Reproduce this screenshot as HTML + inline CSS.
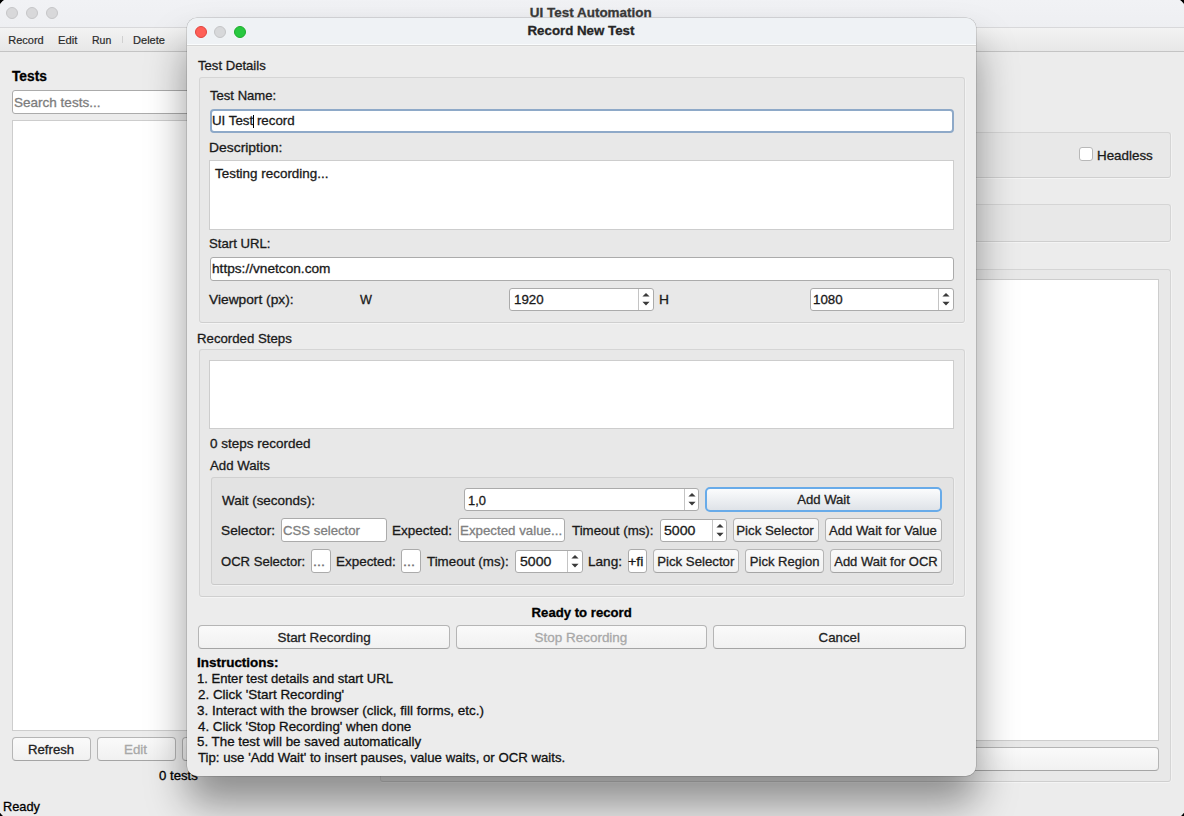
<!DOCTYPE html>
<html><head><meta charset="utf-8"><style>
html,body{margin:0;padding:0;}
body{width:1184px;height:816px;background:#000;position:relative;overflow:hidden;font-family:"Liberation Sans",sans-serif;}
div,svg{position:absolute;box-sizing:border-box;}
.t{white-space:nowrap;-webkit-text-stroke:0.3px currentColor;}
.win{left:-1.5px;top:-1px;width:1186.5px;height:818.5px;background:#ececec;border-radius:10px;overflow:hidden;}
.inp{background:#fff;border:1px solid #ababab;border-radius:3px;}
.ta{background:#fff;border:1px solid #cdcdcd;}
.grp{background:#e8e8e8;border:1px solid #d5d5d5;border-bottom-color:#cfcfcf;border-radius:3px;box-shadow:0 1px 0 rgba(255,255,255,0.45),1px 0 0 rgba(255,255,255,0.3);}
.grp2{background:#e3e3e3;border:1px solid #d0d0d0;border-bottom-color:#c9c9c9;border-radius:3px;box-shadow:0 1px 0 rgba(255,255,255,0.4),1px 0 0 rgba(255,255,255,0.3);}
.btn{background:linear-gradient(#fafafa,#f1f1f1);border:1px solid #b5b5b5;border-bottom-color:#a5a5a5;border-radius:4px;}
.btn.focus{background:linear-gradient(#fbfcfd,#dfe3e8);border:2px solid #68abe9;border-radius:5px;}
.tl{width:12px;height:12px;border-radius:50%;}
</style></head><body>
<div class="win"><div style="left:1.5px;top:1px;width:1184px;height:816px;">

<div class="" style="left:0px;top:0px;width:1184px;height:27px;background:linear-gradient(#f1f2f5,#eeeff2);"></div>
<div class="" style="left:0px;top:27px;width:1184px;height:1px;background:#d8d8da;"></div>
<div class="" style="left:0px;top:28px;width:1184px;height:23px;background:linear-gradient(#f3f3f3,#e7e7e7);"></div>
<div class="" style="left:0px;top:51px;width:1184px;height:1px;background:#c4c4c4;"></div>
<div class="tl" style="left:6px;top:6.800000000000001px;background:#d8d8da;border:1px solid #c6c6c8;"></div>
<div class="tl" style="left:25.8px;top:6.800000000000001px;background:#d8d8da;border:1px solid #c6c6c8;"></div>
<div class="tl" style="left:45.5px;top:6.800000000000001px;background:#d8d8da;border:1px solid #c6c6c8;"></div>
<div class="t" style="left:439.32px;width:300px;text-align:center;top:4.89px;font-size:13.3px;line-height:16px;font-weight:bold;color:#3a3a3a;transform:scale(1.0119,1.0);transform-origin:0 12.61px;">UI Test Automation</div>
<div class="t" style="left:8.27px;top:31.99px;font-size:11px;line-height:16px;color:#2a2a2a;transform:scale(1.0000,1.0);transform-origin:0 11.81px;-webkit-text-stroke:0.2px #2a2a2a;">Record</div>
<div class="t" style="left:58.06px;top:31.99px;font-size:11px;line-height:16px;color:#2a2a2a;transform:scale(1.0192,1.0);transform-origin:0 11.81px;-webkit-text-stroke:0.2px #2a2a2a;">Edit</div>
<div class="t" style="left:92.32px;top:31.99px;font-size:11px;line-height:16px;color:#2a2a2a;transform:scale(0.9537,1.0);transform-origin:0 11.81px;-webkit-text-stroke:0.2px #2a2a2a;">Run</div>
<div class="t" style="left:133.07px;top:31.99px;font-size:11px;line-height:16px;color:#2a2a2a;transform:scale(1.0049,1.0);transform-origin:0 11.81px;-webkit-text-stroke:0.2px #2a2a2a;">Delete</div>
<div class="" style="left:122px;top:36px;width:1px;height:7px;background:#d0d0d0;"></div>
<div class="t" style="left:12.29px;top:68.45px;font-size:14px;line-height:16px;font-weight:bold;color:#000;transform:scale(0.9807,1.0);transform-origin:0 12.85px;">Tests</div>
<div class="inp" style="left:12px;top:90px;width:368px;height:24px;"></div>
<div class="t" style="left:13.66px;top:94.80px;font-size:13px;line-height:16px;color:#7d7d7d;transform:scale(1.0402,1.03);transform-origin:0 12.50px;">Search tests...</div>
<div class="ta" style="left:12px;top:120px;width:368px;height:611px;"></div>
<div class="btn" style="left:12px;top:737px;width:79px;height:24px;"></div>
<div class="t" style="left:10.87px;width:79px;text-align:center;top:741.90px;font-size:13px;line-height:16px;color:#222;transform:scale(1.0147,1.03);transform-origin:0 12.50px;">Refresh</div>
<div class="btn" style="left:97px;top:737px;width:79px;height:24px;"></div>
<div class="t" style="left:95.42px;width:79px;text-align:center;top:741.90px;font-size:13px;line-height:16px;color:#a8a8a8;transform:scale(1.0246,1.03);transform-origin:0 12.50px;">Edit</div>
<div class="btn" style="left:182px;top:737px;width:79px;height:24px;"></div>
<div class="t" style="left:158.8px;top:767.50px;font-size:13px;line-height:16px;color:#000;transform:scale(1.015,1.03);transform-origin:0 12.50px;">0 tests</div>
<div class="t" style="left:3.39px;top:799.20px;font-size:13px;line-height:16px;color:#000;transform:scale(0.9829,1.03);transform-origin:0 12.50px;">Ready</div>
<div class="grp" style="left:380px;top:132px;width:791px;height:46px;"></div>
<div class="" style="left:1079px;top:147px;width:14px;height:14px;background:#fff;border:1px solid #b8b8b8;border-radius:3px;"></div>
<div class="t" style="left:1097.19px;top:147.70px;font-size:13px;line-height:16px;color:#1a1a1a;transform:scale(1.0293,1.03);transform-origin:0 12.50px;">Headless</div>
<div class="grp" style="left:380px;top:204px;width:791px;height:38px;"></div>
<div class="grp" style="left:380px;top:269px;width:791px;height:513px;"></div>
<div class="ta" style="left:392px;top:279px;width:767px;height:462px;"></div>
<div class="btn" style="left:392px;top:747px;width:767px;height:24px;"></div>
</div></div>
<div style="left:187px;top:18px;width:789px;height:758px;border-radius:10px;box-shadow:0 0 0 0.5px rgba(0,0,0,0.22),0 28px 40px rgba(0,0,0,0.4);background:#ececec;overflow:hidden;">
<div style="left:0;top:0;width:789px;height:27px;background:#eff2f5;"></div>
<div style="left:0;top:26px;width:789px;height:1px;background:#fafcfd;"></div>
<div style="left:0;top:27px;width:789px;height:1px;background:#d6d6d6;"></div>
<div style="left:0;top:28px;width:789px;height:1px;background:#efefed;"></div>
</div>
<div class="tl" style="left:194.8px;top:25.7px;background:#ff5f57;border:0.5px solid #e0443e;"></div>
<div class="tl" style="left:214.4px;top:25.7px;background:#d7d8da;border:0.5px solid #c4c5c7;"></div>
<div class="tl" style="left:234.3px;top:25.7px;background:#28c840;border:0.5px solid #1dad2b;"></div>
<div class="t" style="left:430.53px;width:300px;text-align:center;top:23.39px;font-size:13.3px;line-height:16px;font-weight:bold;color:#262626;transform:scale(0.9996,1.0);transform-origin:0 12.61px;">Record New Test</div>
<div class="t" style="left:198.33px;top:57.60px;font-size:13px;line-height:16px;color:#1a1a1a;transform:scale(1.0084,1.03);transform-origin:0 12.50px;">Test Details</div>
<div class="grp" style="left:199px;top:77px;width:766px;height:246px;"></div>
<div class="t" style="left:210.24px;top:87.50px;font-size:13px;line-height:16px;color:#1a1a1a;transform:scale(1.0066,1.03);transform-origin:0 12.50px;">Test Name:</div>
<div class="" style="left:210px;top:109px;width:744px;height:24px;background:#fff;border:2px solid #8ea9c8;border-radius:4px;"></div>
<div class="t" style="left:212.23px;top:113.00px;font-size:13px;line-height:16px;color:#1a1a1a;transform:scale(1.0252,1.03);transform-origin:0 12.50px;">UI Test record</div>
<div class="" style="left:253px;top:115px;width:1px;height:13px;background:#000;"></div>
<div class="t" style="left:208.79px;top:139.50px;font-size:13px;line-height:16px;color:#1a1a1a;transform:scale(1.0688,1.03);transform-origin:0 12.50px;">Description:</div>
<div class="ta" style="left:209px;top:160px;width:745px;height:70px;"></div>
<div class="t" style="left:215.12px;top:165.90px;font-size:13px;line-height:16px;color:#1a1a1a;transform:scale(1.0326,1.03);transform-origin:0 12.50px;">Testing recording...</div>
<div class="t" style="left:209.29px;top:236.40px;font-size:13px;line-height:16px;color:#1a1a1a;transform:scale(1.0125,1.03);transform-origin:0 12.50px;">Start URL:</div>
<div class="inp" style="left:210px;top:257px;width:744px;height:24px;"></div>
<div class="t" style="left:212.05px;top:260.90px;font-size:13px;line-height:16px;color:#1a1a1a;transform:scale(1.0508,1.03);transform-origin:0 12.50px;">https://vnetcon.com</div>
<div class="t" style="left:209.48px;top:292.10px;font-size:13px;line-height:16px;color:#1a1a1a;transform:scale(1.0580,1.03);transform-origin:0 12.50px;">Viewport (px):</div>
<div class="t" style="left:360.13px;top:292.00px;font-size:13px;line-height:16px;color:#1a1a1a;transform:scale(0.9697,1.03);transform-origin:0 12.50px;">W</div>
<div class="inp" style="left:509px;top:288px;width:145px;height:23px;"></div>
<div class="" style="left:638px;top:289px;width:1px;height:21px;background:#c4c4c4;"></div>
<svg style="left:641.0px;top:292px" width="10" height="16" viewBox="0 0 10 16"><path d="M1.4 4.6 L5 0.9 L8.6 4.6Z M1.4 9.8 L5 13.5 L8.6 9.8Z" fill="#3a3a3a"/></svg>
<div class="t" style="left:513.77px;top:292.40px;font-size:13px;line-height:16px;color:#1a1a1a;transform:scale(1.0246,1.03);transform-origin:0 12.50px;">1920</div>
<div class="t" style="left:658.82px;top:292.00px;font-size:13px;line-height:16px;color:#1a1a1a;transform:scale(1.0626,1.03);transform-origin:0 12.50px;">H</div>
<div class="inp" style="left:810px;top:288px;width:144px;height:23px;"></div>
<div class="" style="left:938px;top:289px;width:1px;height:21px;background:#c4c4c4;"></div>
<svg style="left:941.0px;top:292px" width="10" height="16" viewBox="0 0 10 16"><path d="M1.4 4.6 L5 0.9 L8.6 4.6Z M1.4 9.8 L5 13.5 L8.6 9.8Z" fill="#3a3a3a"/></svg>
<div class="t" style="left:813.07px;top:292.40px;font-size:13px;line-height:16px;color:#1a1a1a;transform:scale(1.0246,1.03);transform-origin:0 12.50px;">1080</div>
<div class="t" style="left:197.40px;top:330.70px;font-size:13px;line-height:16px;color:#1a1a1a;transform:scale(1.0169,1.03);transform-origin:0 12.50px;">Recorded Steps</div>
<div class="grp" style="left:199px;top:349px;width:766px;height:248px;"></div>
<div class="ta" style="left:209px;top:360px;width:745px;height:69px;"></div>
<div class="t" style="left:209.71px;top:436.20px;font-size:13px;line-height:16px;color:#1a1a1a;transform:scale(1.0372,1.03);transform-origin:0 12.50px;">0 steps recorded</div>
<div class="t" style="left:209.81px;top:458.20px;font-size:13px;line-height:16px;color:#1a1a1a;transform:scale(1.0179,1.03);transform-origin:0 12.50px;">Add Waits</div>
<div class="grp2" style="left:211px;top:477px;width:743px;height:108px;"></div>
<div class="t" style="left:221.84px;top:493.00px;font-size:13px;line-height:16px;color:#1a1a1a;transform:scale(1.0352,1.03);transform-origin:0 12.50px;">Wait (seconds):</div>
<div class="inp" style="left:464px;top:488px;width:235px;height:23px;"></div>
<div class="" style="left:684px;top:489px;width:1px;height:21px;background:#c4c4c4;"></div>
<svg style="left:686.5px;top:492px" width="10" height="16" viewBox="0 0 10 16"><path d="M1.4 4.6 L5 0.9 L8.6 4.6Z M1.4 9.8 L5 13.5 L8.6 9.8Z" fill="#3a3a3a"/></svg>
<div class="t" style="left:467.69px;top:493.10px;font-size:13px;line-height:16px;color:#1a1a1a;transform:scale(0.9935,1.03);transform-origin:0 12.50px;">1,0</div>
<div class="btn focus" style="left:705px;top:487px;width:237px;height:25px;"></div>
<div class="t" style="left:704.12px;width:237px;text-align:center;top:492.40px;font-size:13px;line-height:16px;color:#222;transform:scale(1.0088,1.03);transform-origin:0 12.50px;">Add Wait</div>
<div class="t" style="left:221.09px;top:523.30px;font-size:13px;line-height:16px;color:#1a1a1a;transform:scale(1.0529,1.03);transform-origin:0 12.50px;">Selector:</div>
<div class="inp" style="left:281px;top:518px;width:106px;height:24px;"></div>
<div class="t" style="left:283.16px;top:522.90px;font-size:13px;line-height:16px;color:#808080;transform:scale(1.0152,1.03);transform-origin:0 12.50px;">CSS selector</div>
<div class="t" style="left:392.04px;top:523.30px;font-size:13px;line-height:16px;color:#1a1a1a;transform:scale(1.0372,1.03);transform-origin:0 12.50px;">Expected:</div>
<div class="inp" style="left:458px;top:518px;width:107px;height:24px;"></div>
<div class="t" style="left:460.06px;top:522.90px;font-size:13px;line-height:16px;color:#808080;transform:scale(1.0239,1.03);transform-origin:0 12.50px;">Expected value...</div>
<div class="t" style="left:571.68px;top:523.30px;font-size:13px;line-height:16px;color:#1a1a1a;transform:scale(1.0225,1.03);transform-origin:0 12.50px;">Timeout (ms):</div>
<div class="inp" style="left:660px;top:519px;width:67px;height:23px;"></div>
<div class="" style="left:712px;top:520px;width:1px;height:21px;background:#c4c4c4;"></div>
<svg style="left:714.5px;top:523px" width="10" height="16" viewBox="0 0 10 16"><path d="M1.4 4.6 L5 0.9 L8.6 4.6Z M1.4 9.8 L5 13.5 L8.6 9.8Z" fill="#3a3a3a"/></svg>
<div class="t" style="left:664.47px;top:523.40px;font-size:13px;line-height:16px;color:#1a1a1a;transform:scale(1.0870,1.03);transform-origin:0 12.50px;">5000</div>
<div class="btn" style="left:733px;top:518px;width:86px;height:24px;"></div>
<div class="t" style="left:731.48px;width:86px;text-align:center;top:522.90px;font-size:13px;line-height:16px;color:#222;transform:scale(1.0220,1.03);transform-origin:0 12.50px;">Pick Selector</div>
<div class="btn" style="left:825px;top:518px;width:117px;height:24px;"></div>
<div class="t" style="left:824.27px;width:117px;text-align:center;top:522.90px;font-size:13px;line-height:16px;color:#222;transform:scale(1.0073,1.03);transform-origin:0 12.50px;">Add Wait for Value</div>
<div class="t" style="left:221.33px;top:553.90px;font-size:13px;line-height:16px;color:#1a1a1a;transform:scale(1.0051,1.03);transform-origin:0 12.50px;">OCR Selector:</div>
<div class="inp" style="left:311px;top:549px;width:20px;height:24px;"></div>
<div class="t" style="left:313.37px;top:553.90px;font-size:13px;line-height:16px;color:#707070;transform:scale(1.0962,1.03);transform-origin:0 12.50px;">...</div>
<div class="t" style="left:335.52px;top:553.90px;font-size:13px;line-height:16px;color:#1a1a1a;transform:scale(1.0337,1.03);transform-origin:0 12.50px;">Expected:</div>
<div class="inp" style="left:401px;top:549px;width:20px;height:24px;"></div>
<div class="t" style="left:403.25px;top:553.90px;font-size:13px;line-height:16px;color:#707070;transform:scale(1.1084,1.03);transform-origin:0 12.50px;">...</div>
<div class="t" style="left:427.03px;top:553.90px;font-size:13px;line-height:16px;color:#1a1a1a;transform:scale(1.0255,1.03);transform-origin:0 12.50px;">Timeout (ms):</div>
<div class="inp" style="left:515px;top:550px;width:68px;height:23px;"></div>
<div class="" style="left:567px;top:551px;width:1px;height:21px;background:#c4c4c4;"></div>
<svg style="left:570.0px;top:554px" width="10" height="16" viewBox="0 0 10 16"><path d="M1.4 4.6 L5 0.9 L8.6 4.6Z M1.4 9.8 L5 13.5 L8.6 9.8Z" fill="#3a3a3a"/></svg>
<div class="t" style="left:520.18px;top:554.40px;font-size:13px;line-height:16px;color:#1a1a1a;transform:scale(1.0835,1.03);transform-origin:0 12.50px;">5000</div>
<div class="t" style="left:587.61px;top:553.90px;font-size:13px;line-height:16px;color:#1a1a1a;transform:scale(1.0455,1.03);transform-origin:0 12.50px;">Lang:</div>
<div class="inp" style="left:628px;top:549px;width:19px;height:24px;"></div>
<div class="t" style="left:628.16px;top:553.90px;font-size:13px;line-height:16px;color:#1a1a1a;transform:scale(1.1021,1.03);transform-origin:0 12.50px;">+fi</div>
<div class="btn" style="left:653px;top:549px;width:86px;height:24px;"></div>
<div class="t" style="left:651.71px;width:86px;text-align:center;top:553.90px;font-size:13px;line-height:16px;color:#222;transform:scale(1.0180,1.03);transform-origin:0 12.50px;">Pick Selector</div>
<div class="btn" style="left:745px;top:549px;width:79px;height:24px;"></div>
<div class="t" style="left:744.51px;width:79px;text-align:center;top:553.90px;font-size:13px;line-height:16px;color:#222;transform:scale(1.0037,1.03);transform-origin:0 12.50px;">Pick Region</div>
<div class="btn" style="left:830px;top:549px;width:112px;height:24px;"></div>
<div class="t" style="left:830.13px;width:112px;text-align:center;top:553.90px;font-size:13px;line-height:16px;color:#222;transform:scale(0.9993,1.03);transform-origin:0 12.50px;">Add Wait for OCR</div>
<div class="t" style="left:429.79px;width:300px;text-align:center;top:604.50px;font-size:13px;line-height:16px;font-weight:bold;color:#000;transform:scale(1.0110,1.03);transform-origin:0 12.50px;">Ready to record</div>
<div class="btn" style="left:198px;top:625px;width:252px;height:24px;"></div>
<div class="t" style="left:193.55px;width:252px;text-align:center;top:629.90px;font-size:13px;line-height:16px;color:#222;transform:scale(1.0324,1.03);transform-origin:0 12.50px;">Start Recording</div>
<div class="btn" style="left:456px;top:625px;width:251px;height:24px;"></div>
<div class="t" style="left:451.12px;width:251px;text-align:center;top:629.90px;font-size:13px;line-height:16px;color:#a8a8a8;transform:scale(1.0354,1.03);transform-origin:0 12.50px;">Stop Recording</div>
<div class="btn" style="left:713px;top:625px;width:253px;height:24px;"></div>
<div class="t" style="left:709.88px;width:253px;text-align:center;top:629.90px;font-size:13px;line-height:16px;color:#222;transform:scale(1.0217,1.03);transform-origin:0 12.50px;">Cancel</div>
<div class="t" style="left:197.38px;top:655.20px;font-size:13px;line-height:16px;font-weight:bold;color:#000;transform:scale(1.0350,1.03);transform-origin:0 12.50px;">Instructions:</div>
<div class="t" style="left:197.29px;top:671.00px;font-size:13px;line-height:16px;color:#111;transform:scale(1.0045,1.03);transform-origin:0 12.50px;">1. Enter test details and start URL</div>
<div class="t" style="left:197.58px;top:686.60px;font-size:13px;line-height:16px;color:#111;transform:scale(1.0328,1.03);transform-origin:0 12.50px;">2. Click 'Start Recording'</div>
<div class="t" style="left:197.45px;top:702.60px;font-size:13px;line-height:16px;color:#111;transform:scale(1.0346,1.03);transform-origin:0 12.50px;">3. Interact with the browser (click, fill forms, etc.)</div>
<div class="t" style="left:197.92px;top:718.60px;font-size:13px;line-height:16px;color:#111;transform:scale(1.0252,1.03);transform-origin:0 12.50px;">4. Click 'Stop Recording' when done</div>
<div class="t" style="left:197.43px;top:734.30px;font-size:13px;line-height:16px;color:#111;transform:scale(1.0251,1.03);transform-origin:0 12.50px;">5. The test will be saved automatically</div>
<div class="t" style="left:197.97px;top:750.00px;font-size:13px;line-height:16px;color:#111;transform:scale(1.0153,1.03);transform-origin:0 12.50px;">Tip: use 'Add Wait' to insert pauses, value waits, or OCR waits.</div>
</body></html>
